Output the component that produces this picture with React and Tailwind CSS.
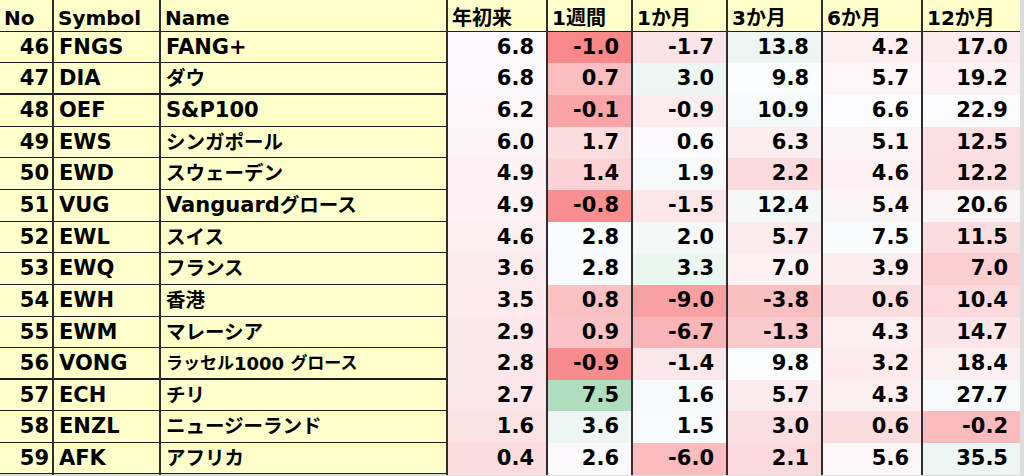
const COLS = [
  { label: '年初来', mid: 7.5, min: -26, max: 40 },
  { label: '1週間', mid: 2.7, min: -2.0, max: 12.5 },
  { label: '1か月', mid: 0.8, min: -14.8, max: 25 },
  { label: '3か月', mid: 9.5, min: -22.5, max: 57 },
  { label: '6か月', mid: 6.8, min: -22, max: 40 },
  { label: '12か月', mid: 23, min: -29.7, max: 162 },
]

const ROWS = [
  { no: 46, sym: 'FNGS', name: 'FANG+', v: [6.8, -1.0, -1.7, 13.8, 4.2, 17.0], h: 'h-[31px]' },
  { no: 47, sym: 'DIA', name: 'ダウ', v: [6.8, 0.7, 3.0, 9.8, 5.7, 19.2], h: 'h-[32px]', thick: true },
  { no: 48, sym: 'OEF', name: 'S&P100', v: [6.2, -0.1, -0.9, 10.9, 6.6, 22.9], h: 'h-[32px]' },
  { no: 49, sym: 'EWS', name: 'シンガポール', v: [6.0, 1.7, 0.6, 6.3, 5.1, 12.5], h: 'h-[31px]' },
  { no: 50, sym: 'EWD', name: 'スウェーデン', v: [4.9, 1.4, 1.9, 2.2, 4.6, 12.2], h: 'h-[32px]' },
  { no: 51, sym: 'VUG', name: 'Vanguardグロース', v: [4.9, -0.8, -1.5, 12.4, 5.4, 20.6], h: 'h-[32px]' },
  { no: 52, sym: 'EWL', name: 'スイス', v: [4.6, 2.8, 2.0, 5.7, 7.5, 11.5], h: 'h-[31px]' },
  { no: 53, sym: 'EWQ', name: 'フランス', v: [3.6, 2.8, 3.3, 7.0, 3.9, 7.0], h: 'h-[32px]' },
  { no: 54, sym: 'EWH', name: '香港', v: [3.5, 0.8, -9.0, -3.8, 0.6, 10.4], h: 'h-[32px]' },
  { no: 55, sym: 'EWM', name: 'マレーシア', v: [2.9, 0.9, -6.7, -1.3, 4.3, 14.7], h: 'h-[31px]' },
  { no: 56, sym: 'VONG', name: 'ラッセル1000 グロース', v: [2.8, -0.9, -1.4, 9.8, 3.2, 18.4], h: 'h-[32px]', thick: true, small: true },
  { no: 57, sym: 'ECH', name: 'チリ', v: [2.7, 7.5, 1.6, 5.7, 4.3, 27.7], h: 'h-[31px]' },
  { no: 58, sym: 'ENZL', name: 'ニュージーランド', v: [1.6, 3.6, 1.5, 3.0, 0.6, -0.2], h: 'h-[32px]' },
  { no: 59, sym: 'AFK', name: 'アフリカ', v: [0.4, 2.6, -6.0, 2.1, 5.6, 35.5], h: 'h-[31px]' },
]

const WHITE = [252, 252, 255]
const RED = [248, 105, 107]
const GREEN = [99, 190, 123]

// excel-like 3 colour scale
function scale(v, c) {
  let t, to
  if (v <= c.mid) {
    t = Math.min(1, (c.mid - v) / (c.mid - c.min))
    to = RED
  } else {
    t = Math.min(1, (v - c.mid) / (c.max - c.mid))
    to = GREEN
  }
  const rgb = WHITE.map((w, i) => Math.round(w + (to[i] - w) * t))
  return `rgb(${rgb.join(',')})`
}

// kana/kanji runs get a slightly smaller size than the latin text
function Mixed({ text, cjk }) {
  const parts = text.match(/[\u3000-\u9fff]+|[^\u3000-\u9fff]+/g) || []
  return parts.map((p, i) =>
    /[\u3000-\u9fff]/.test(p) ? (
      <span key={i} className={cjk}>
        {p}
      </span>
    ) : (
      <span key={i} className="whitespace-pre">{p}</span>
    )
  )
}

const GRID = 'grid grid-cols-[54px_107px_287px_100px_85px_95px_95px_100px_97px]'
const CELL = 'flex items-center border-r-2 border-[#2e2e2e]'

export default function App() {
  return (
    <div className="w-[1024px] h-[476px] bg-[#dcdcdc] overflow-hidden font-['DejaVu_Sans','Noto_Sans_CJK_JP',sans-serif] text-black">
      <div className="w-[1020px] bg-[#ffffcc]">
        {/* Header */}
        <div className={`${GRID} h-[32px] border-b border-[#1e1e1e] text-[20px] font-bold`}>
          <div className={`${CELL} pl-[4px] pt-[3px]`}>No</div>
          <div className={`${CELL} pl-[4px] pt-[3px]`}>Symbol</div>
          <div className={`${CELL} pl-[4px] pt-[3px]`}>Name</div>
          {COLS.map((c) => (
            <div key={c.label} className={`${CELL} pl-[4px] pt-[3px] last:border-r-0`}>
              <Mixed text={c.label} cjk="text-[20px]" />
            </div>
          ))}
        </div>

        {/* Rows */}
        {ROWS.map((r) => (
          <div
            key={r.no}
            className={`${GRID} ${r.h} ${r.thick ? 'border-b-2' : 'border-b'} border-[#1e1e1e] text-[21px] font-bold`}
          >
            <div className={`${CELL} justify-end pr-[3px]`}>{r.no}</div>
            <div className={`${CELL} pl-[5px]`}>{r.sym}</div>
            <div className={`${CELL} pl-[5px] whitespace-nowrap ${r.small ? 'text-[18px]' : ''}`}>
              <Mixed text={r.name} cjk={r.small ? 'text-[17px]' : 'text-[19.5px]'} />
            </div>
            {r.v.map((v, i) => (
              <div
                key={i}
                className={`${CELL} justify-end pr-[12px] last:border-r-0`}
                style={{ background: scale(v, COLS[i]) }}
              >
                {v.toFixed(1)}
              </div>
            ))}
          </div>
        ))}
      </div>
    </div>
  )
}
